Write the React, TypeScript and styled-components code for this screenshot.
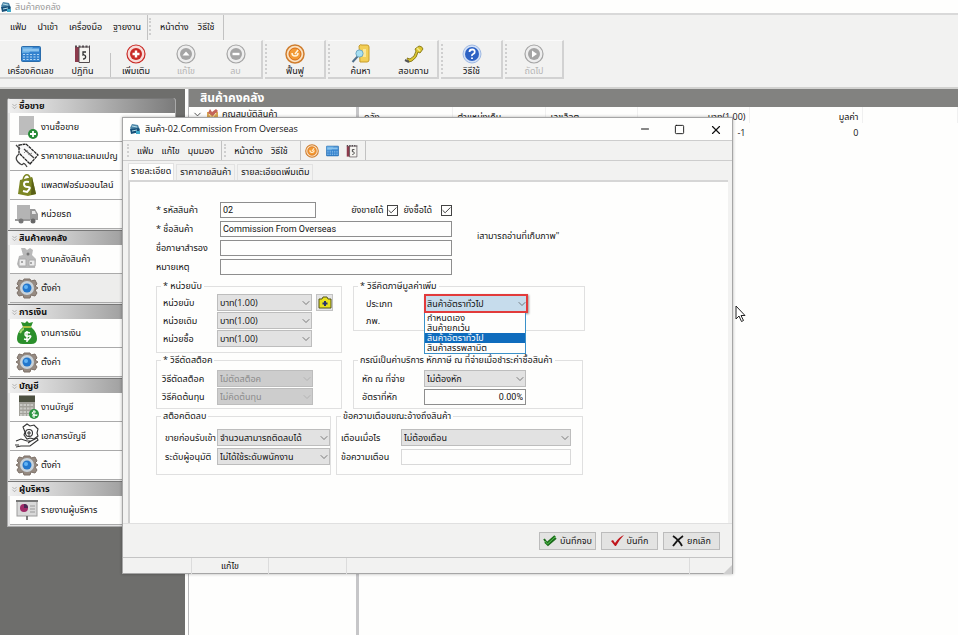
import React from "react";
import styled, { createGlobalStyle, css } from "styled-components";
import { Check, ChevronDown, ChevronsDown, Minus, Square, X } from "lucide-react";

const Global = createGlobalStyle`
  * { box-sizing: border-box; }
  html, body, #root { height: 100%; margin: 0; }
  body, button, input, select, table {
    font-family: "Open Sans", "Noto Sans", "Noto Sans Thai", sans-serif;
    font-size: 9px;
    line-height: 12px;
    color: #111;
  }
`;

/* ---------- main window ---------- */

const Desktop = styled.main`
  position: relative;
  height: 100vh;
  min-height: 540px;
  overflow: hidden;
  display: flex;
  flex-direction: column;
  background: #fefefd;
`;

const AppTitle = styled.header`
  height: 13px;
  padding-right: 8px;
  display: flex;
  align-items: center;
  gap: 3px;
  color: #999;
  h1 { margin: 0; font-size: 9px; font-weight: 400; line-height: 12px; }
`;

const ToolArea = styled.div`
  border-top: 2px solid #d9d9d9;
  border-bottom: 2px solid #d2d2d0;
  background: #f2f2f1;
  padding-bottom: 8px;
`;

const MenuRow = styled.nav<{ $height: number }>`
  display: flex;
  height: ${(p) => p.$height}px;
`;

const MenuBand = styled.div<{ $gap: number; $pad: string }>`
  display: flex;
  align-items: center;
  gap: ${(p) => p.$gap}px;
  padding: ${(p) => p.$pad};
  border-right: 1px solid #c2c2c2;
`;

const Grip = styled.span`
  align-self: stretch;
  margin: 3px 0;
  border-left: 2px dotted #cfcfcf;
`;

const MenuItem = styled.button`
  border: 0;
  padding: 0;
  background: none;
  white-space: nowrap;
`;

const Bands = styled.div`
  display: flex;
  gap: 2px;
`;

const Band = styled.div`
  display: flex;
  height: 39px;
  padding-right: 1px;
  border-top: 1px solid #fafafa;
  border-right: 2px solid #d2d2d2;
  border-bottom: 2px solid #d2d2d2;
`;

const ToolButton = styled.button<{ $width: number }>`
  width: ${(p) => p.$width}px;
  padding: 3px 0 0;
  border: 0;
  background: none;
  display: flex;
  flex-direction: column;
  align-items: center;
  gap: 1px;
  white-space: nowrap;
  &:disabled { color: #b5b5b5; }
`;

const Divider = styled.span`
  width: 1px;
  margin: 12px 0 0 6px;
  background: #c4c4c4;
`;

const Workspace = styled.div`
  flex: 1;
  min-height: 0;
  display: flex;
`;

/* ---------- sidebar ---------- */

const Sidebar = styled.aside`
  width: 185px;
  padding: 9px 9px 0 7px;
  background: #6e6e6c;
`;

const Groups = styled.div`
  border-radius: 3px 3px 0 0;
  overflow: hidden;
  border: 1px solid #a9a9a9;
  border-top: 0;
  background: #e4e4e4;
`;

const Group = styled.section`
  padding-bottom: 1px;
`;

const GroupTitle = styled.h2`
  margin: 0;
  height: 15px;
  padding-left: 2px;
  display: flex;
  align-items: center;
  font-size: 9px;
  line-height: 12px;
  font-weight: 700;
  border-top: 1px solid #777;
  background: linear-gradient(90deg, #efefef, #c9c9c9 35%, #7b7b7b);
`;

const NavItem = styled.a<{ $tinted?: boolean }>`
  height: 29px;
  margin-left: 2px;
  padding-left: 5px;
  display: flex;
  align-items: center;
  gap: 2px;
  color: #111;
  text-decoration: none;
  white-space: nowrap;
  background: ${(p) => (p.$tinted ? "#ededec" : "#fefefd")};
  border-bottom: 1px solid #aaa;
`;

/* ---------- list view behind the dialog ---------- */

const Splitter = styled.div`
  width: 4px;
  background: #fefefd;
  border-right: 1px solid #b9b9bb;
`;

const Browser = styled.section`
  flex: 1;
  min-width: 0;
  display: flex;
  flex-direction: column;
`;

const BrowserTitle = styled.h2`
  margin: 0;
  height: 18px;
  padding-left: 11px;
  font-size: 12px;
  line-height: 18px;
  color: #fff;
  background: #828280;
`;

const BrowserBody = styled.div`
  flex: 1;
  display: flex;
`;

const Tree = styled.div`
  width: 170px;
  padding: 1px 3px;
  border-right: 3px solid #c6c6c8;
`;

const TreeNode = styled.div`
  display: flex;
  align-items: center;
  gap: 3px;
`;

const StockTable = styled.table`
  width: 100%;
  table-layout: fixed;
  border-collapse: collapse;
  th, td {
    height: 16px;
    padding: 4px 3px 0 5px;
    font-weight: 400;
    text-align: left;
    border-right: 1px solid #f0f0f0;
  }
  td { border-color: transparent; }
`;

const Cell = styled.td<{ $right?: boolean }>`
  && { text-align: ${(p) => (p.$right ? "right" : "left")}; }
`;

const TableArea = styled.div`
  flex: 1;
  min-width: 0;
`;

/* ---------- dialog ---------- */

const Dialog = styled.section`
  position: absolute;
  top: 117px;
  left: 122px;
  right: 225px;
  bottom: 61px;
  min-width: 520px;
  min-height: 440px;
  display: flex;
  flex-direction: column;
  background: #f2f2f1;
  border: 1px solid #a6a6a6;
  box-shadow: 0 0 3px rgba(0, 0, 0, 0.3);
`;

const DialogTitle = styled.header`
  height: 22px;
  padding: 0 12px 0 6px;
  display: flex;
  align-items: center;
  gap: 4px;
  background: #fefefd;
  h2 { margin: 0; flex: 1; font-size: 9px; font-weight: 400; line-height: 12px; }
`;

const Caption = styled.div`
  display: flex;
  gap: 24px;
`;

const CaptionButton = styled.button`
  border: 0;
  padding: 0;
  width: 11px;
  height: 12px;
  background: none;
  display: grid;
  place-items: center;
`;

const DialogMenu = styled.div`
  border-top: 1px solid #cdcdcd;
  border-bottom: 1px solid #cdcdcd;
`;

const IconGroup = styled.div`
  display: flex;
  align-items: center;
  gap: 7px;
  padding: 0 7px 0 4px;
  border-right: 1px solid #c2c2c2;
`;

const Tabs = styled.div`
  display: flex;
  align-items: flex-end;
  gap: 2px;
  height: 19px;
  padding: 2px 5px 0;
`;

const Tab = styled.button<{ $active?: boolean }>`
  height: 16px;
  padding: 0 3px 1px;
  border: 1px solid #e2e2e2;
  border-bottom: 0;
  background: #f2f2f1;
  white-space: nowrap;
  ${(p) => p.$active && css`
    height: 17px;
    padding: 0 2px 2px;
    background: #fefefd;
  `}
`;

const Page = styled.form`
  flex: 1;
  min-height: 0;
  margin: 0 4px 0 5px;
  padding: 20px 26px;
  background: #fefefd;
  border-top: 2px solid #d6d6d6;
  border-left: 2px solid #cfcfcf;
`;

const TopArea = styled.div`
  display: flex;
  align-items: center;
  gap: 25px;
  margin-bottom: 5px;
`;

const SideNote = styled.p`
  margin: 0;
  padding-bottom: 6px;
  white-space: nowrap;
`;

const TopFields = styled.div`
  width: 296px;
  display: flex;
  flex-direction: column;
  gap: 3px;
`;

const FieldRow = styled.div<{ $label: number; $height?: number }>`
  height: ${(p) => p.$height ?? 16}px;
  display: grid;
  grid-template-columns: ${(p) => p.$label}px 1fr;
  align-items: center;
  label { white-space: nowrap; }
`;

const TextInput = styled.input<{ $align?: "right"; $faint?: boolean }>`
  width: 100%;
  min-width: 0;
  height: 16px;
  padding: 0 2px;
  border: 1px solid ${(p) => (p.$faint ? "#d9d9d9" : "#8e8e8e")};
  border-radius: 0;
  background: #fefefd;
  font-family: Roboto, "Noto Sans Thai", sans-serif;
  text-align: ${(p) => p.$align ?? "left"};
`;

const CodeLine = styled.div`
  display: grid;
  grid-template-columns: 96px 1fr;
  align-items: center;
`;

const Checks = styled.div`
  display: flex;
  justify-content: flex-end;
  align-items: center;
  gap: 5px;
`;

const CheckLabel = styled.label<{ $gap: number }>`
  display: flex;
  align-items: center;
  gap: ${(p) => p.$gap}px;
`;

const Stack = styled.span`
  display: grid;
  align-items: center;
  min-width: 0;
  > * { grid-area: 1 / 1; }
  > svg { justify-self: end; pointer-events: none; }
`;

const Tick = styled.input`
  appearance: none;
  margin: 0;
  width: 11px;
  height: 11px;
  border: 1px solid #444;
  background: #fefefd;
  & + svg { visibility: hidden; }
  &:checked + svg { visibility: visible; }
`;

const GroupGrid = styled.div<{ $cols: string; $gap: number }>`
  display: grid;
  grid-template-columns: ${(p) => p.$cols};
  column-gap: ${(p) => p.$gap}px;
  align-items: start;
  margin-bottom: 1px;
`;

const Box = styled.fieldset<{ $height: number; $pad: number; $top: number }>`
  min-width: 0;
  height: ${(p) => p.$height}px;
  margin: 0;
  padding: ${(p) => p.$top}px 0 0 ${(p) => p.$pad}px;
  border: 1px solid #e0e0e0;
  legend {
    margin-left: ${(p) => 4 - p.$pad}px;
    padding: 0 2px;
    white-space: nowrap;
  }
`;

const Lines = styled.div<{ $gap: number; $width: number }>`
  display: flex;
  flex-direction: column;
  gap: ${(p) => p.$gap}px;
  width: ${(p) => p.$width}px;
`;

const Select = styled.select<{ $hot?: boolean }>`
  appearance: none;
  width: 100%;
  height: 17px;
  padding: 0 12px 0 2px;
  border: 1px solid #bdbdbd;
  border-radius: 0;
  background: #e2e2e2;
  &:disabled { background: #cdcdcd; color: #8b8b8b; opacity: 1; }
  ${(p) => p.$hot && css`
    height: 19px;
    padding-left: 1px;
    border: 2px solid #e23b3b;
    background: #c6dcec;
    box-shadow: 1px 1px 2px rgba(0, 0, 0, 0.4);
  `}
`;

const UnitSlot = styled.div`
  display: grid;
  grid-template-columns: 95px 17px;
  gap: 4px;
`;

const SmallButton = styled.button`
  padding: 0;
  border: 1px solid #c2c2c2;
  background: #e4e4e4;
  display: grid;
  place-items: center;
`;

const DropAnchor = styled.div`
  position: relative;
`;

const DropList = styled.ul`
  position: absolute;
  top: 19px;
  left: 0;
  width: 102px;
  margin: 0;
  padding: 0;
  list-style: none;
  background: #fefefd;
  border: 1px solid #3b91c9;
  border-top: 0;
`;

const DropOption = styled.li<{ $on?: boolean }>`
  height: 10px;
  padding-left: 2px;
  line-height: 10px;
  white-space: nowrap;
  ${(p) => p.$on && css`
    background: #0f6cbd;
    color: #fff;
  `}
`;

const Footer = styled.footer`
  height: 34px;
  padding: 0 12px 0;
  border-top: 1px solid #e0e0e0;
  display: flex;
  align-items: center;
  justify-content: flex-end;
  gap: 5px;
`;

const ActionButton = styled.button`
  width: 57px;
  height: 18px;
  padding: 0;
  border: 1px solid #bcbcbc;
  background: #e3e3e2;
  display: flex;
  align-items: center;
  justify-content: center;
  gap: 3px;
  white-space: nowrap;
`;

const StatusBar = styled.div`
  height: 16px;
  display: grid;
  grid-template-columns: 69px 77px 78px 1fr 42px;
  border-top: 1px solid #c4c4c4;
  text-align: center;
  line-height: 16px;
  > span { border-right: 1px solid #dcdcdc; }
  > :last-child { border: 0; display: flex; align-items: flex-end; justify-content: flex-end; }
`;

const Pointer = styled.svg`
  position: absolute;
  left: 735px;
  top: 305px;
`;

/* ---------- drawings ---------- */

const AppIcon = () => (
  <svg width="12" height="12" viewBox="0 0 12 12">
    <path d="M3 1l6 1 2 5-8 1-2-3z" fill="#4d86a8" />
    <path d="M1 6l9-1 1 4-9 2z" fill="#174f78" />
    <path d="M3 3l5 1M3 8l5-1" stroke="#b9dfe8" />
    <path d="M7 8h4v3H7z" fill="#3fa9c9" />
  </svg>
);

const CalculatorIcon = ({ w = 20, h = 20 }: { w?: number; h?: number }) => (
  <svg width={w} height={h} viewBox="0 0 20 18">
    <rect x="0.5" y="1.500" width="19" height="15" rx="1" fill="#3483cf" stroke="#2a6cab" />
    <path d="M1 2h11L8 8H1z" fill="#5fa8e2" />
    <rect x="2" y="3.500" width="16" height="3" fill="#8cc4ee" />
    <path d="M2 9.500h16M2 12h16M2 14.500h16" stroke="#b4d7f3" strokeDasharray="2 1.500" />
  </svg>
);

const CalendarIcon = ({ w = 17, h = 20 }: { w?: number; h?: number }) => (
  <svg width={w} height={h} viewBox="0 0 17 20">
    <path d="M1 3h6v15H1z" fill="#8c3b4c" />
    <path d="M5 3h10.500v15.500H5z" fill="#f6f4f1" stroke="#544c50" />
    <path d="M1 2.500h15" stroke="#544c50" strokeWidth="2" strokeDasharray="2 1.500" />
    <path d="M12 8H9v3c3-1 4 4 0 4" fill="none" stroke="#333" strokeWidth="1.300" />
  </svg>
);

const RoundIcon = ({ color, light, children }: { color: string; light: string; children: React.ReactNode }) => (
  <svg width="20" height="20" viewBox="0 0 20 20">
    <circle cx="10" cy="10" r="9" fill={light} stroke={color} strokeWidth="1.200" />
    <circle cx="10" cy="10" r="6" fill={color} />
    {children}
  </svg>
);

const PlusMark = () => <path d="M10 6.500v7M6.500 10h7" stroke="#fff" strokeWidth="2.400" />;
const MinusMark = () => <path d="M6.500 10h7" stroke="#fff" strokeWidth="2.400" />;
const UpMark = () => <path d="M6.500 11.500L10 7.500l3.500 4z" fill="#fff" />;
const PlayMark = () => <path d="M8 6.500l5 3.500-5 3.500z" fill="#fff" />;

const CoinIcon = ({ size = 20 }: { size?: number }) => (
  <svg width={size} height={size} viewBox="0 0 20 20">
    <circle cx="10" cy="10" r="9" fill="#fbe2c0" stroke="#cf7d2e" strokeWidth="1.500" />
    <circle cx="10" cy="10" r="6" fill="#f39a35" stroke="#d66c14" />
    <path d="M7 9a3 3 0 1 0 6 0M10 10l3-4" fill="none" stroke="#fff4dd" strokeWidth="1.500" />
  </svg>
);

const FindIcon = () => (
  <svg width="20" height="20" viewBox="0 0 20 20">
    <path d="M8 2q1-2 3-1h5q2 0 2 2v13q0 2-2 2H9z" fill="#f3cf57" stroke="#c79c2a" />
    <path d="M12 5h3v8h-3z" fill="#fae79a" />
    <path d="M7 12l-5.500 6" stroke="#50708b" strokeWidth="2" />
    <circle cx="8.500" cy="9.500" r="3.600" fill="#a6dff2" stroke="#6fa9c4" />
  </svg>
);

const PhoneIcon = () => (
  <svg width="20" height="20" viewBox="0 0 20 20">
    <path d="M3 14l3 1q5-2 6-8l-1-2 4-3q3 0 4 3l-3 4-2-1q-1 6-6 9l-3 1z" fill="#dcc62f" stroke="#8f8021" />
    <path d="M13 4l3 3" stroke="#f5ec8f" strokeWidth="1.500" />
    <path d="M1 16l4 2" stroke="#555" strokeWidth="2" />
  </svg>
);

const HelpIcon = () => (
  <svg width="20" height="20" viewBox="0 0 20 20">
    <circle cx="10" cy="10" r="9" fill="#d3e1f7" stroke="#9fb9e3" />
    <circle cx="10" cy="10" r="7" fill="#2d62c4" />
    <path d="M7.500 8q0-2.500 2.700-2.500T12.700 8q0 1.300-1.500 2T10 12M10 13.500v1.500" fill="none" stroke="#fff" strokeWidth="1.800" />
  </svg>
);

const Art = ({ children }: { children: React.ReactNode }) => (
  <svg width="24" height="26" viewBox="0 0 24 26">{children}</svg>
);

const SheetArt = () => (
  <Art>
    <rect x="4" y="2" width="15" height="19" fill="#bdbdbd" />
    <circle cx="18" cy="20" r="5" fill="#268a36" />
    <path d="M18 17v6M15 20h6" stroke="#fff" strokeWidth="1.800" />
  </Art>
);

const TagArt = () => (
  <Art>
    <path d="M4 2l7-1 12 11-8 9L4 10z" fill="#f8f8f8" stroke="#222" strokeWidth="1.300" strokeDasharray="3 0.600" />
    <path d="M9 6l10 9M4 11q-5 4-1 8t5 2 4 3M1 2l4 4" fill="none" stroke="#444" strokeWidth="1.300" />
    <path d="M9 10l3-3 2 5 3-2" fill="none" stroke="#888" />
  </Art>
);

const BagArt = () => (
  <Art>
    <path d="M5 8l12-3 4 17-8 2-10-2z" fill="#7c8623" />
    <path d="M17 5l4 17-5 1z" fill="#596016" />
    <path d="M8 8q1-6 5-5 2 1 2 4" fill="none" stroke="#7c8623" strokeWidth="1.500" />
    <path d="M14 10q-5-1-5 2t4 3-1 5l-4-1" fill="none" stroke="#fff" strokeWidth="2" />
  </Art>
);

const TruckArt = () => (
  <Art>
    <path d="M2 4h13v14H2z" fill="#b4b4b4" />
    <path d="M15 8h5l3 5v6h-8zM0 18h15v2H0z" fill="#999" />
    <circle cx="6" cy="20" r="2.500" fill="#777" />
    <circle cx="18" cy="20" r="2.500" fill="#666" />
    <path d="M17 10h3l1 3h-4z" fill="#e5e5e5" />
  </Art>
);

const StockArt = () => (
  <Art>
    <path d="M6 2h4l2 2 3-2 3 2-1 5 4 4-1 9H4l-2-4 2-8 4-1z" fill="#b9b9b9" />
    <path d="M4 13h7v7H4zM14 14h6v6h-6z" fill="#ededed" stroke="#aaa" />
    <circle cx="13" cy="8" r="1.500" fill="#777" />
    <path d="M7 15v2M16 16v2" stroke="#666" />
  </Art>
);

const GearArt = () => (
  <Art>
    <path d="M9 4h6l1 2 4-1 2 4-2 2 3 2-3 2 2 3-2 3-4-1-1 3H9l-1-3-4 1-2-3 2-3-3-2 3-2-2-2 2-4 4 1z" fill="#968b82" stroke="#7d7168" />
    <circle cx="12" cy="13" r="7" fill="#c9d3da" />
    <circle cx="12" cy="13" r="4.500" fill="#2377cc" />
    <circle cx="11" cy="12" r="2" fill="#62b4f5" />
  </Art>
);

const MoneyArt = () => (
  <Art>
    <path d="M8 7L6 2l4 1 2-2 2 2 4-1-2 5q6 5 6 12 0 5-6 5H8q-6 0-6-5Q2 12 8 7z" fill="#2b8f2b" />
    <path d="M5 13q2-4 4-4" stroke="#a2d76e" strokeWidth="2" fill="none" />
    <path d="M8 7h8" stroke="#d7d14c" strokeWidth="1.500" />
    <path d="M15 13q-5-2-5 1t4 2-1 4l-4-1M12 11v11" fill="none" stroke="#fff" strokeWidth="1.500" />
  </Art>
);

const LedgerArt = () => (
  <Art>
    <rect x="4" y="1" width="16" height="21" fill="#a2a19a" />
    <rect x="4" y="2" width="16" height="6" fill="#4c5040" />
    <path d="M5 11h14M5 14.500h14M5 18h14M5 21h9" stroke="#c9c9c4" strokeWidth="2" strokeDasharray="2.500 1" />
    <circle cx="19" cy="20" r="5" fill="#2b9440" />
    <path d="M21 18q-4-1-4 1t4 2-4 1M19 16v8" fill="none" stroke="#fff" />
  </Art>
);

const HandArt = () => (
  <Art>
    <g fill="none" stroke="#333" strokeWidth="1.100">
      <circle cx="14" cy="10" r="3.500" />
      <path d="M8 4l4-3 3 2 4-1 4 4-1 4 1 3-4 3-4-1-3 1-3-4 1-3zM12 10h4M14 8v5" />
      <path d="M1 18l5-2 6 2h4l-3 2M16 18l6-3 1 2-8 6H6l-5 1M0 22h4" />
    </g>
  </Art>
);

const BoardArt = () => (
  <Art>
    <rect x="2" y="4" width="20" height="15" fill="#d9d9d9" stroke="#9b9b9b" />
    <path d="M1 4h22" stroke="#777" strokeWidth="2" />
    <circle cx="9" cy="11" r="4" fill="#a12b68" />
    <path d="M9 11V7a4 4 0 0 1 4 4z" fill="#4c2754" />
    <path d="M15 9h5M15 12h5M15 15h5" stroke="#999" />
    <path d="M12 19v4" stroke="#555" strokeWidth="1.500" />
  </Art>
);

const BoxIcon = () => (
  <svg width="13" height="12" viewBox="0 0 13 12">
    <path d="M1 4h11v8H1z" fill="#d9a452" />
    <path d="M2 5l2-4 2 3 4-3 2 2-5 5z" fill="#c4655a" />
    <path d="M3 6l3 4 4-5" fill="none" stroke="#f5e4b5" />
  </svg>
);

const FolderPlus = () => (
  <svg width="14" height="14" viewBox="0 0 14 14">
    <path d="M1 3h3l1-2h4l1 2h3v9H1z" fill="#e8e11c" stroke="#55551a" />
    <path d="M7 5v5M4.500 7.500h5" stroke="#27336c" strokeWidth="2" />
  </svg>
);

const DoubleTick = () => (
  <svg width="14" height="13" viewBox="0 0 14 13">
    <path d="M1 5l3 4 8-7M2 8l3 3 8-7" fill="none" stroke="#1b6d1b" strokeWidth="2" />
    <path d="M2 7l2.500 3 8-7.500" fill="none" stroke="#52c04b" />
  </svg>
);

const RedTick = () => (
  <svg width="13" height="13" viewBox="0 0 13 13">
    <path d="M0 7l2-1 2 3q4-6 9-8-5 5-8 11H4z" fill="#c0161c" />
  </svg>
);

const BlackCross = () => (
  <svg width="12" height="12" viewBox="0 0 12 12">
    <path d="M1 1q6 4 9 10M11 1Q5 5 1 11" fill="none" stroke="#151515" strokeWidth="1.800" />
  </svg>
);

/* ---------- parts ---------- */

type DropProps = { id: string; value: string; disabled?: boolean; hot?: boolean; options?: string[] };

const Drop = ({ id, value, disabled, hot, options }: DropProps) => (
  <Stack>
    <Select id={id} defaultValue={value} disabled={disabled} $hot={hot}>
      {(options ?? [value]).map((o) => <option key={o}>{o}</option>)}
    </Select>
    <ChevronDown size={12} strokeWidth={1.5} color={disabled ? "#aaa" : "#555"} />
  </Stack>
);

const CheckField = ({ text, gap }: { text: string; gap: number }) => (
  <CheckLabel $gap={gap}>
    {text}
    <Stack>
      <Tick type="checkbox" defaultChecked />
      <Check size={11} strokeWidth={2} color="#333" />
    </Stack>
  </CheckLabel>
);

const navigation = [
  { title: "ซื้อขาย", items: [
    { text: "งานซื้อขาย", art: <SheetArt /> },
    { text: "ราคาขายและแคมเปญ", art: <TagArt /> },
    { text: "แพลตฟอร์มออนไลน์", art: <BagArt /> },
    { text: "หน่วยรถ", art: <TruckArt /> },
  ] },
  { title: "สินค้าคงคลัง", items: [
    { text: "งานคลังสินค้า", art: <StockArt /> },
    { text: "ตั้งค่า", art: <GearArt />, tinted: true },
  ] },
  { title: "การเงิน", items: [
    { text: "งานการเงิน", art: <MoneyArt /> },
    { text: "ตั้งค่า", art: <GearArt /> },
  ] },
  { title: "บัญชี", items: [
    { text: "งานบัญชี", art: <LedgerArt /> },
    { text: "เอกสารบัญชี", art: <HandArt /> },
    { text: "ตั้งค่า", art: <GearArt /> },
  ] },
  { title: "ผู้บริหาร", items: [{ text: "รายงานผู้บริหาร", art: <BoardArt /> }] },
];

const taxKinds = ["กำหนดเอง", "สินค้ายกเว้น", "สินค้าอัตราทั่วไป", "สินค้าสรรพสามิต"];

const MainTools = () => (
  <ToolArea>
    <MenuRow $height={25}>
      <MenuBand $gap={11} $pad="0 6px 2px 10px">
        <MenuItem>แฟ้ม</MenuItem>
        <MenuItem>นำเข้า</MenuItem>
        <MenuItem>เครื่องมือ</MenuItem>
        <MenuItem>ฐายงาน</MenuItem>
      </MenuBand>
      <MenuBand $gap={9} $pad="0 9px 2px 1px">
        <Grip />
        <MenuItem>หน้าต่าง</MenuItem>
        <MenuItem>วิธีใช้</MenuItem>
      </MenuBand>
    </MenuRow>
    <Bands>
      <Band>
        <ToolButton $width={61}><CalculatorIcon />เครื่องคิดเลข</ToolButton>
        <ToolButton $width={43}><CalendarIcon />ปฏิทิน</ToolButton>
        <Divider />
        <ToolButton $width={50}><RoundIcon color="#c92a26" light="#f8dcd9"><PlusMark /></RoundIcon>เพิ่มเติม</ToolButton>
        <ToolButton $width={50} disabled><RoundIcon color="#a5a5a5" light="#eee"><UpMark /></RoundIcon>แก้ไข</ToolButton>
        <ToolButton $width={49} disabled><RoundIcon color="#a5a5a5" light="#eee"><MinusMark /></RoundIcon>ลบ</ToolButton>
      </Band>
      <Band>
        <Grip />
        <ToolButton $width={56}><CoinIcon />ฟื้นฟู</ToolButton>
      </Band>
      <Band>
        <Grip />
        <ToolButton $width={61}><FindIcon />ค้นหา</ToolButton>
        <ToolButton $width={45}><PhoneIcon />สอบถาม</ToolButton>
      </Band>
      <Band>
        <Grip />
        <ToolButton $width={57}><HelpIcon />วิธีใช้</ToolButton>
      </Band>
      <Band>
        <Grip />
        <ToolButton $width={54} disabled><RoundIcon color="#a5a5a5" light="#eee"><PlayMark /></RoundIcon>ถัดไป</ToolButton>
      </Band>
    </Bands>
  </ToolArea>
);

const ItemForm = () => (
  <Page>
    <TopArea>
      <TopFields>
        <FieldRow $label={64}>
          <label htmlFor="code">* รหัสสินค้า</label>
          <CodeLine>
            <TextInput id="code" defaultValue="02" />
            <Checks>
              <CheckField text="ยังขายได้" gap={4} />
              <CheckField text="ยังซื้อได้" gap={9} />
            </Checks>
          </CodeLine>
        </FieldRow>
        <FieldRow $label={64}>
          <label htmlFor="name">* ชื่อสินค้า</label>
          <TextInput id="name" defaultValue="Commission From Overseas" />
        </FieldRow>
        <FieldRow $label={64}>
          <label htmlFor="alt">ชื่อภาษาสำรอง</label>
          <TextInput id="alt" />
        </FieldRow>
        <FieldRow $label={64}>
          <label htmlFor="note">หมายเหตุ</label>
          <TextInput id="note" />
        </FieldRow>
      </TopFields>
      <SideNote>iสามารถอ่านที่เก็บภาพ"</SideNote>
    </TopArea>

    <GroupGrid $cols="186px 232px" $gap={11}>
      <Box $height={73} $pad={6} $top={2}>
        <legend>* หน่วยนับ</legend>
        <Lines $gap={1} $width={170}>
          <FieldRow $label={54} $height={17}>
            <label htmlFor="u1">หน่วยนับ</label>
            <UnitSlot>
              <Drop id="u1" value="บาท(1.00)" />
              <SmallButton type="button" aria-label="+"><FolderPlus /></SmallButton>
            </UnitSlot>
          </FieldRow>
          <FieldRow $label={54} $height={17}>
            <label htmlFor="u2">หน่วยเดิม</label>
            <UnitSlot><Drop id="u2" value="บาท(1.00)" /></UnitSlot>
          </FieldRow>
          <FieldRow $label={54} $height={17}>
            <label htmlFor="u3">หน่วยซื้อ</label>
            <UnitSlot><Drop id="u3" value="บาท(1.00)" /></UnitSlot>
          </FieldRow>
        </Lines>
      </Box>
      <Box $height={51} $pad={12} $top={2}>
        <legend>* วิธีคิดภาษีมูลค่าเพิ่ม</legend>
        <Lines $gap={1} $width={162}>
          <FieldRow $label={58} $height={17}>
            <label htmlFor="tax">ประเภท</label>
            <DropAnchor>
              <Drop id="tax" value={taxKinds[2]} options={taxKinds} hot />
              <DropList>
                {taxKinds.map((k, i) => <DropOption key={k} $on={i === 2}>{k}</DropOption>)}
              </DropList>
            </DropAnchor>
          </FieldRow>
          <FieldRow $label={58} $height={17}><span>ภพ.</span></FieldRow>
        </Lines>
      </Box>
    </GroupGrid>

    <GroupGrid $cols="186px 230px" $gap={11}>
      <Box $height={55} $pad={5} $top={4}>
        <legend>* วิธีตัดสต็อค</legend>
        <Lines $gap={1} $width={151}>
          <FieldRow $label={55} $height={17}>
            <label htmlFor="cut">วิธีตัดสต็อค</label>
            <Drop id="cut" value="ไม่ตัดสต็อค" disabled />
          </FieldRow>
          <FieldRow $label={55} $height={17}>
            <label htmlFor="cost">วิธีคิดต้นทุน</label>
            <Drop id="cost" value="ไม่คิดต้นทุน" disabled />
          </FieldRow>
        </Lines>
      </Box>
      <Box $height={55} $pad={8} $top={4}>
        <legend>กรณีเป็นค่าบริการ หักภาษี ณ ที่จ่ายเมื่อชำระค่าซื้อสินค้า</legend>
        <Lines $gap={1} $width={164}>
          <FieldRow $label={62} $height={17}>
            <label htmlFor="wht">หัก ณ ที่จ่าย</label>
            <Drop id="wht" value="ไม่ต้องหัก" />
          </FieldRow>
          <FieldRow $label={62} $height={17}>
            <label htmlFor="rate">อัตราที่หัก</label>
            <TextInput id="rate" defaultValue="0.00%" $align="right" />
          </FieldRow>
        </Lines>
      </Box>
    </GroupGrid>

    <GroupGrid $cols="175px 247px" $gap={5}>
      <Box $height={65} $pad={8} $top={7}>
        <legend>สต็อคติดลบ</legend>
        <Lines $gap={2} $width={165}>
          <FieldRow $label={52} $height={17}>
            <label htmlFor="neg">ขายก่อนรับเข้า</label>
            <Drop id="neg" value="จำนวนสามารถติดลบได้" />
          </FieldRow>
          <FieldRow $label={52} $height={17}>
            <label htmlFor="level">ระดับผู้อนุมัติ</label>
            <Drop id="level" value="ไม่ได้ใช้ระดับพนักงาน" />
          </FieldRow>
        </Lines>
      </Box>
      <Box $height={65} $pad={4} $top={7}>
        <legend>ข้อความเตือนขณะอ้างถึงสินค้า</legend>
        <Lines $gap={2} $width={230}>
          <FieldRow $label={60} $height={17}>
            <label htmlFor="when">เตือนเมื่อไร</label>
            <Drop id="when" value="ไม่ต้องเตือน" />
          </FieldRow>
          <FieldRow $label={60} $height={17}>
            <label htmlFor="msg">ข้อความเตือน</label>
            <TextInput id="msg" $faint />
          </FieldRow>
        </Lines>
      </Box>
    </GroupGrid>
  </Page>
);

export default function App() {
  return (
    <Desktop>
      <Global />
      <AppTitle><AppIcon /><h1>สินค้าคงคลัง</h1></AppTitle>
      <MainTools />
      <Workspace>
        <Sidebar>
          <Groups>
            {navigation.map((g) => (
              <Group key={g.title}>
                <GroupTitle><ChevronsDown size={9} strokeWidth={1.5} color="#888" />{g.title}</GroupTitle>
                {g.items.map((it) => (
                  <NavItem key={it.text} href="#" $tinted={"tinted" in it}>{it.art}{it.text}</NavItem>
                ))}
              </Group>
            ))}
          </Groups>
        </Sidebar>
        <Splitter />
        <Browser>
          <BrowserTitle>สินค้าคงคลัง</BrowserTitle>
          <BrowserBody>
            <Tree>
              <TreeNode><ChevronDown size={11} color="#444" /><BoxIcon />คุณสมบัติสินค้า</TreeNode>
            </Tree>
            <TableArea>
              <StockTable>
                <colgroup>
                  <col width="93" /><col width="93" /><col width="92" /><col width="112" /><col width="113" /><col />
                </colgroup>
                <thead>
                  <tr>
                    <Cell as="th">คลัง</Cell>
                    <Cell as="th">ตำแหน่งเก็บ</Cell>
                    <Cell as="th">เลขล็อต</Cell>
                    <Cell as="th" $right>บาท(1.00)</Cell>
                    <Cell as="th" $right>มูลค่า</Cell>
                    <th />
                  </tr>
                </thead>
                <tbody>
                  <tr>
                    <td /><td /><td />
                    <Cell $right>-1</Cell>
                    <Cell $right>0</Cell>
                    <td />
                  </tr>
                </tbody>
              </StockTable>
            </TableArea>
          </BrowserBody>
        </Browser>
      </Workspace>

      <Dialog role="dialog" aria-labelledby="dialog-title">
        <DialogTitle>
          <AppIcon />
          <h2 id="dialog-title">สินค้า-02.Commission From Overseas</h2>
          <Caption>
            <CaptionButton aria-label="Minimize"><Minus size={12} strokeWidth={2} /></CaptionButton>
            <CaptionButton aria-label="Maximize"><Square size={11} strokeWidth={2} /></CaptionButton>
            <CaptionButton aria-label="Close"><X size={14} strokeWidth={2} /></CaptionButton>
          </Caption>
        </DialogTitle>
        <DialogMenu>
          <MenuRow $height={19}>
            <MenuBand $gap={8} $pad="0 7px 0 4px">
              <Grip />
              <MenuItem>แฟ้ม</MenuItem>
              <MenuItem>แก้ไข</MenuItem>
              <MenuItem>มุมมอง</MenuItem>
            </MenuBand>
            <MenuBand $gap={8} $pad="0 12px 0 2px">
              <Grip />
              <MenuItem>หน้าต่าง</MenuItem>
              <MenuItem>วิธีใช้</MenuItem>
            </MenuBand>
            <IconGroup>
              <CoinIcon size={14} />
              <CalculatorIcon w={13} h={12} />
              <CalendarIcon w={12} h={14} />
            </IconGroup>
          </MenuRow>
        </DialogMenu>
        <Tabs role="tablist">
          <Tab role="tab" $active>รายละเอียด</Tab>
          <Tab role="tab">ราคาขายสินค้า</Tab>
          <Tab role="tab">รายละเอียดเพิ่มเติม</Tab>
        </Tabs>
        <ItemForm />
        <Footer>
          <ActionButton><DoubleTick />บันทึกจบ</ActionButton>
          <ActionButton><RedTick />บันทึก</ActionButton>
          <ActionButton><BlackCross />ยกเลิก</ActionButton>
        </Footer>
        <StatusBar>
          <span />
          <span>แก้ไข</span>
          <span />
          <span />
          <span>
            <svg width="9" height="9" viewBox="0 0 9 9"><path d="M9 0v9H0z" fill="#cfcfcf" /></svg>
          </span>
        </StatusBar>
      </Dialog>

      <Pointer width="12" height="18" viewBox="0 0 12 18">
        <path d="M1 1v13l3-3 2.500 5.500 2-1L6 10.500h4z" fill="#fff" stroke="#222" />
      </Pointer>
    </Desktop>
  );
}
